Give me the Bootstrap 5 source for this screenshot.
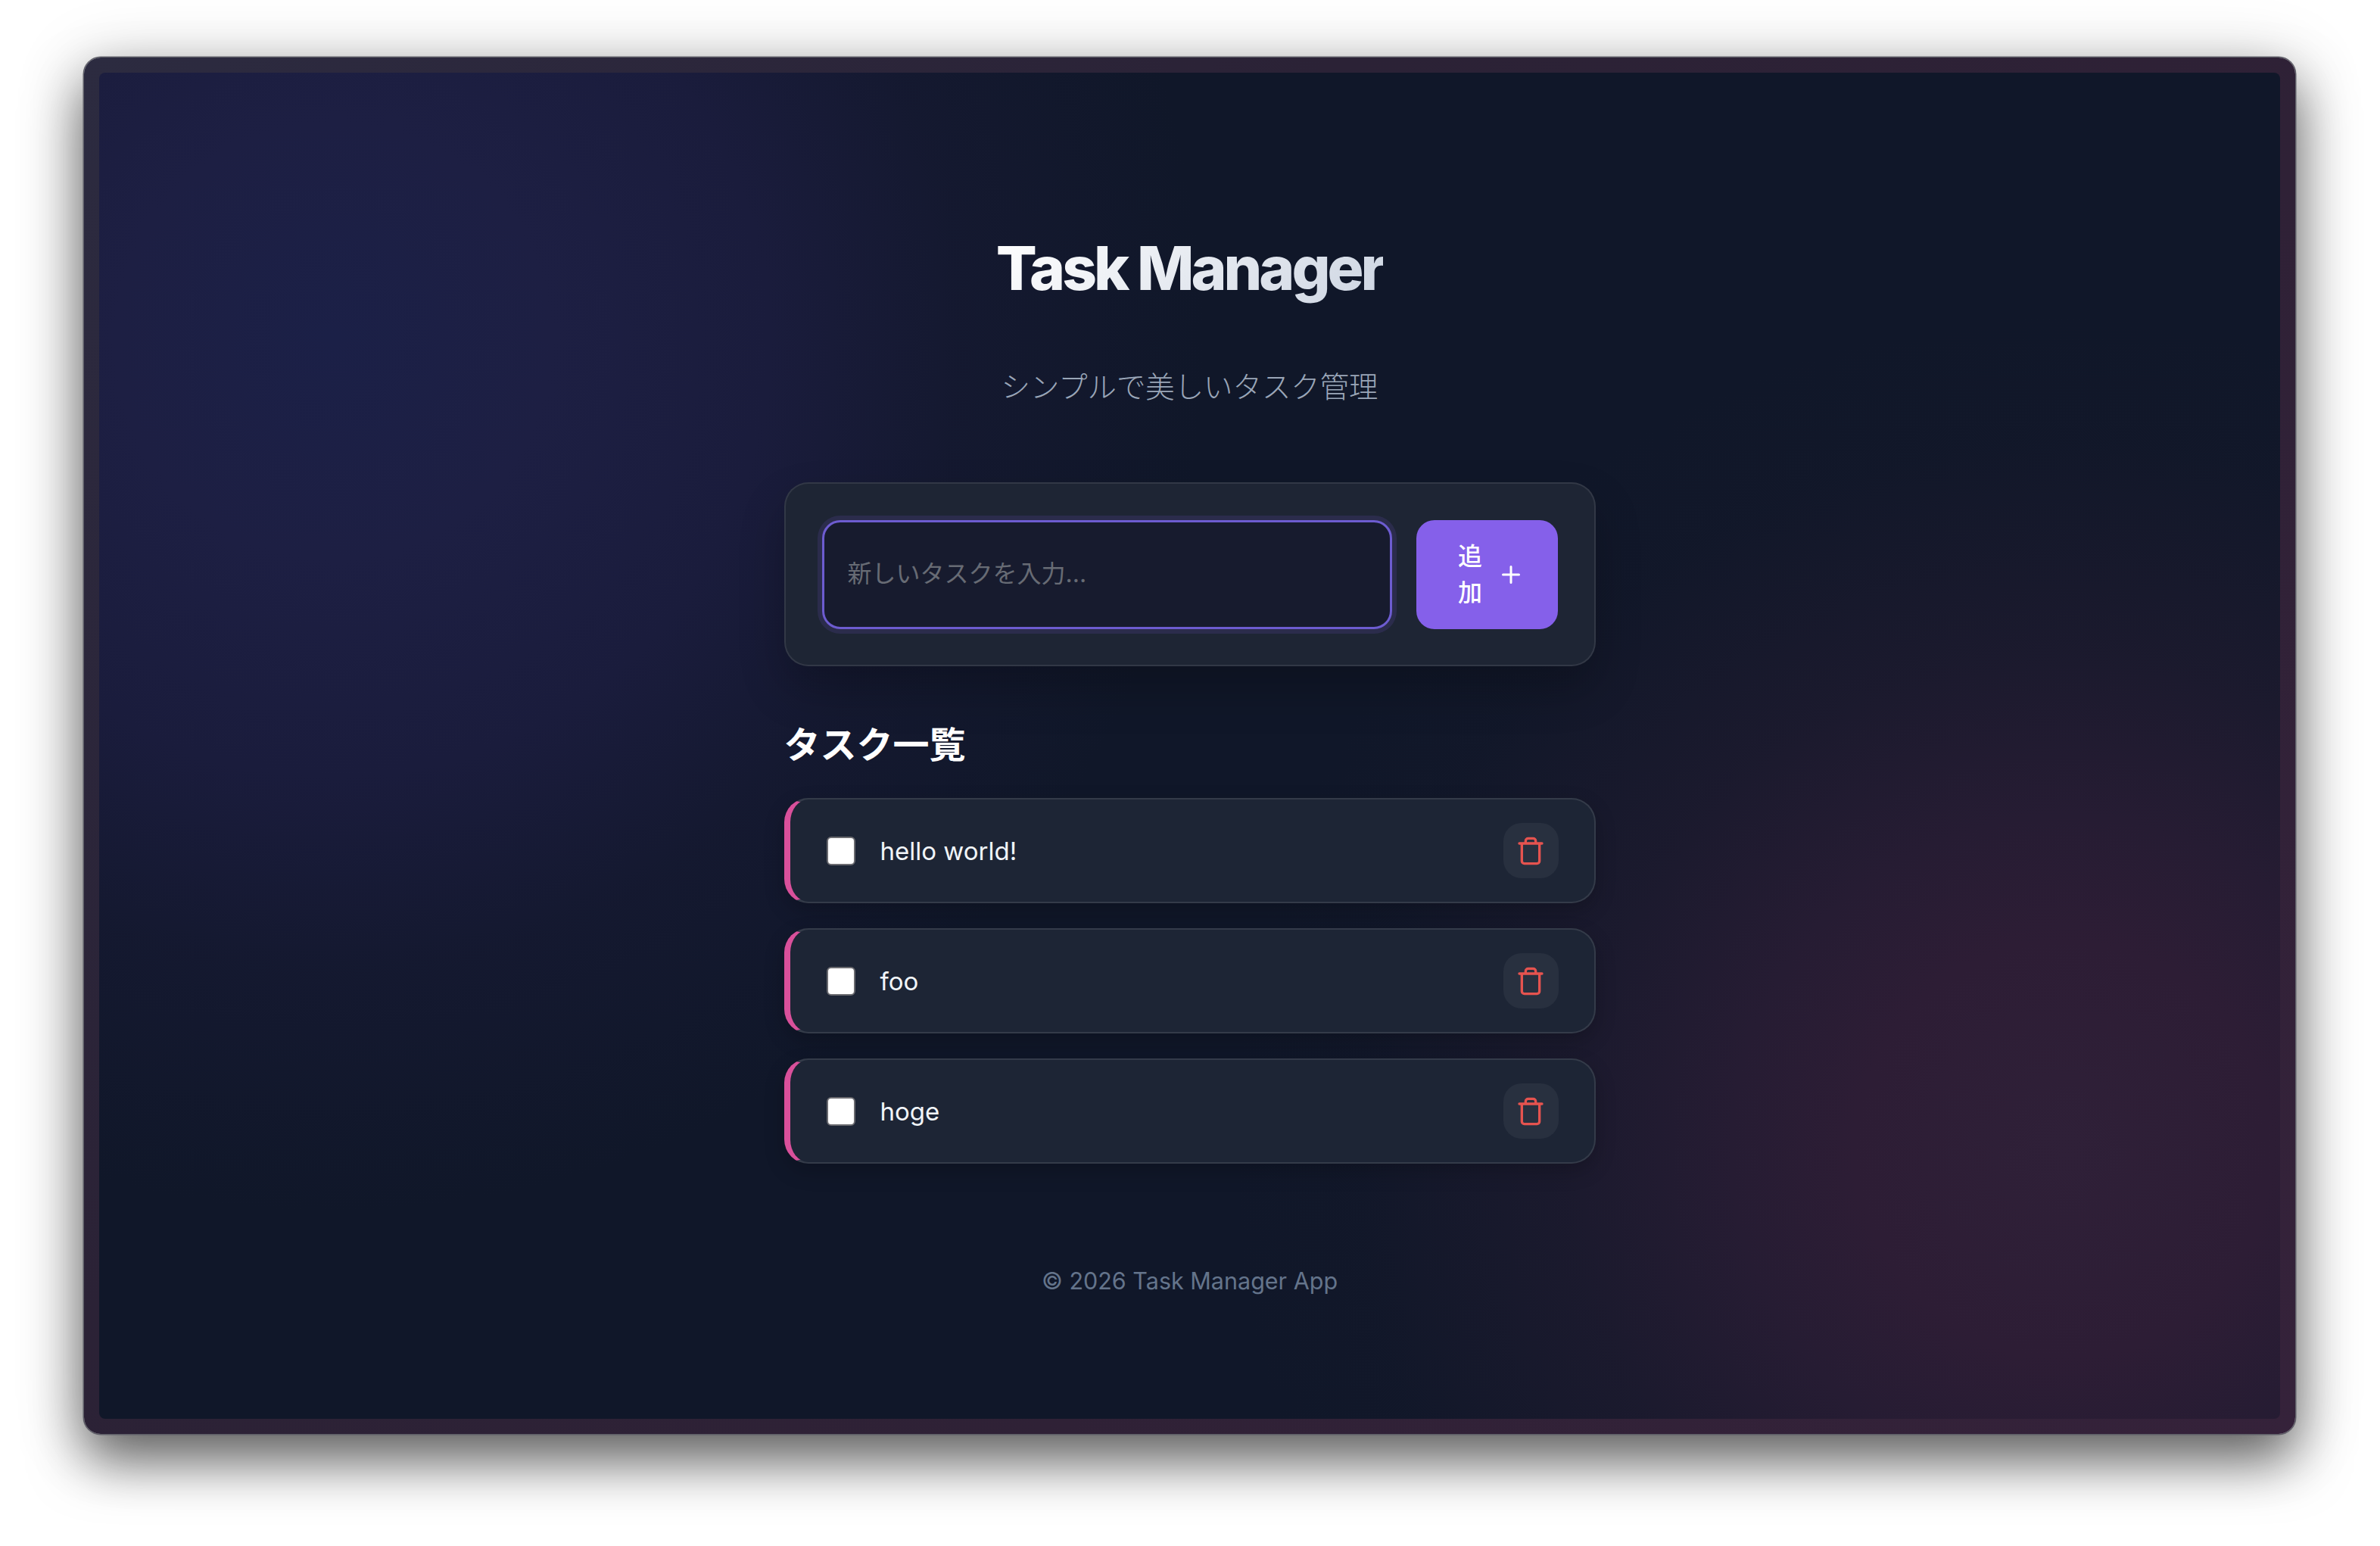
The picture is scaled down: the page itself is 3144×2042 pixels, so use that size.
<!DOCTYPE html>
<html lang="ja">
<head>
<meta charset="utf-8">
<title>Task Manager</title>
<link href="https://cdn.jsdelivr.net/npm/bootstrap@5.3.0/dist/css/bootstrap.min.css" rel="stylesheet">
<style>
html,body{height:100%}
body{background:#fff;padding:76px 112px 0 111px;overflow:hidden;font-family:Inter,"Noto Sans CJK JP",sans-serif;}
.app-window{height:1818px;border-radius:22px;padding:20px;background:linear-gradient(135deg,#2c2b40 0%,#2b2236 35%,#2f2136 65%,#35223a 100%);box-shadow:0 0 0 1.5px #5f5f68,0 36px 70px rgba(0,0,0,.55),0 10px 90px rgba(0,0,0,.22)}
.app-inner{height:100%;border-radius:8px;background-color:#101729;background-image:radial-gradient(circle 1150px at 309px 354px,#1b2047 0%,#1d1f43 25%,#1a1c3c 50%,rgba(21,25,49,.85) 72%,rgba(16,23,41,0) 100%),radial-gradient(circle 1100px at 2596px 1422px,#2f2038 0%,#2d1d35 25%,#261c33 40%,rgba(28,26,46,.9) 60%,rgba(20,24,42,.4) 85%,rgba(16,23,41,0) 100%)}
.app-col{width:1072px;margin:0 auto;padding-top:205px}
.app-title{font-size:80px;line-height:106px;font-weight:800;letter-spacing:-4px;margin:0 auto 74px;color:transparent;background:linear-gradient(135deg,#fff,#cdd5e2);-webkit-background-clip:text;background-clip:text;width:max-content}
.app-sub{font-size:38.4px;line-height:60px;font-weight:300;color:#9aa6b8;margin:0 0 96px}
.add-panel{height:243px;padding:48px;background:#1e2534;border:2px solid rgba(255,255,255,.09);border-radius:32px;box-shadow:0 30px 60px rgba(0,0,0,.22);gap:32px}
.add-input.form-control{height:144px;width:753px;flex:none;background:#171b2e;border:3px solid #6d5cd0;border-radius:24px;box-shadow:0 0 0 6px rgba(124,92,230,.14);padding:0 31px 2px;font-size:32px;color:#fff}
.add-input.form-control::placeholder{color:#676b74;opacity:1}
.add-btn.btn{width:187px;height:144px;background:#8560ea;border:0;border-radius:24px;color:#fff;font-size:32px;line-height:48px;gap:20px;padding:0 0 0 12px}
.add-label{width:32px;display:block;word-break:break-all;font-weight:500}
.list-head{font-size:48px;line-height:68px;font-weight:700;color:#fff;margin:70px 0 36px}
.task-stack{gap:33px}
.task-row{height:139px;background:#1d2535;border:2px solid rgba(255,255,255,.1);border-left:8px solid #d9509b;border-radius:32px;padding:0 47px 0 48px;box-shadow:0 10px 28px rgba(0,0,0,.2);gap:33px}
.task-box.form-check-input{width:38px;height:38px;margin:0;border:2.5px solid #6b6b70;border-radius:6px;background-color:#fff;flex:none}
.task-text{font-size:33px;line-height:48px;color:#f1f5f9}
.task-del.btn{width:73px;height:73px;padding:0;background:rgba(255,255,255,.05);border:0;border-radius:24px;color:#e5534f}
.app-foot{font-size:30.5px;line-height:46px;color:#64748b;margin:132px 0 0}
</style>
</head>
<body>
<main class="app-window">
  <div class="app-inner">
  <div class="app-col">
    <h1 class="app-title">Task Manager</h1>
    <p class="app-sub text-center">シンプルで美しいタスク管理</p>
    <form class="add-panel d-flex align-items-center">
      <input class="add-input form-control" type="text" placeholder="新しいタスクを入力...">
      <button class="add-btn btn d-flex align-items-center justify-content-center" type="button">
        <span class="add-label">追加</span>
        <svg width="36" height="36" viewBox="0 0 24 24" fill="none" stroke="currentColor" stroke-width="2" stroke-linecap="round" aria-hidden="true"><path d="M12 5v14M5 12h14"/></svg>
      </button>
    </form>
    <h2 class="list-head">タスク一覧</h2>
    <div class="task-stack d-flex flex-column">
      <div class="task-row d-flex align-items-center">
        <input class="task-box form-check-input" type="checkbox">
        <span class="task-text flex-grow-1">hello world!</span>
        <button class="task-del btn d-flex align-items-center justify-content-center" type="button"><svg width="40" height="40" viewBox="0 0 24 24" fill="none" stroke="currentColor" stroke-width="2" stroke-linecap="round" stroke-linejoin="round" aria-hidden="true"><path d="M3 6h18M19 6v14a2 2 0 0 1-2 2H7a2 2 0 0 1-2-2V6M8 6V4a2 2 0 0 1 2-2h4a2 2 0 0 1 2 2v2"/></svg></button>
      </div>
      <div class="task-row d-flex align-items-center">
        <input class="task-box form-check-input" type="checkbox">
        <span class="task-text flex-grow-1">foo</span>
        <button class="task-del btn d-flex align-items-center justify-content-center" type="button"><svg width="40" height="40" viewBox="0 0 24 24" fill="none" stroke="currentColor" stroke-width="2" stroke-linecap="round" stroke-linejoin="round" aria-hidden="true"><path d="M3 6h18M19 6v14a2 2 0 0 1-2 2H7a2 2 0 0 1-2-2V6M8 6V4a2 2 0 0 1 2-2h4a2 2 0 0 1 2 2v2"/></svg></button>
      </div>
      <div class="task-row d-flex align-items-center">
        <input class="task-box form-check-input" type="checkbox">
        <span class="task-text flex-grow-1">hoge</span>
        <button class="task-del btn d-flex align-items-center justify-content-center" type="button"><svg width="40" height="40" viewBox="0 0 24 24" fill="none" stroke="currentColor" stroke-width="2" stroke-linecap="round" stroke-linejoin="round" aria-hidden="true"><path d="M3 6h18M19 6v14a2 2 0 0 1-2 2H7a2 2 0 0 1-2-2V6M8 6V4a2 2 0 0 1 2-2h4a2 2 0 0 1 2 2v2"/></svg></button>
      </div>
    </div>
    <p class="app-foot text-center">© 2026 Task Manager App</p>
  </div>
  </div>
</main>
<script src="https://cdn.jsdelivr.net/npm/bootstrap@5.3.0/dist/js/bootstrap.bundle.min.js"></script>
</body>
</html>
